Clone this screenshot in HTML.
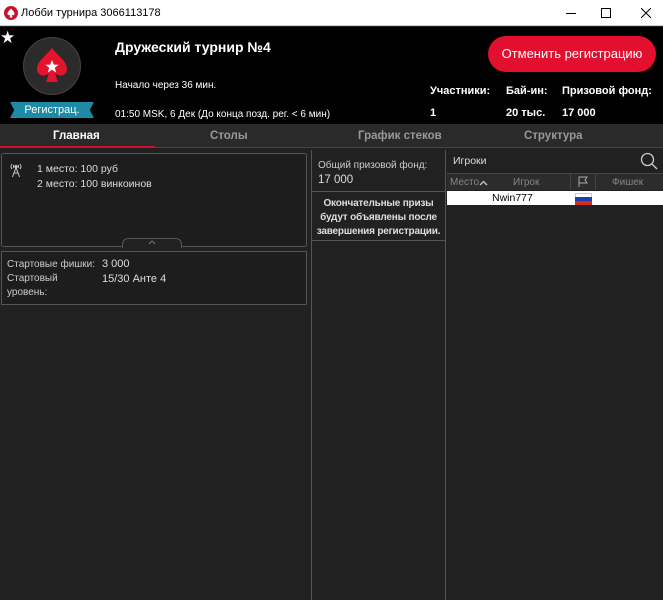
<!DOCTYPE html>
<html><head><meta charset="utf-8"><style>
*{margin:0;padding:0;box-sizing:border-box}
body{width:663px;height:600px;overflow:hidden;background:#212121;font-family:"Liberation Sans",sans-serif;color:#ddd;position:relative}
.a{position:absolute;white-space:nowrap}
</style></head><body>
<div class="a" style="left:0;top:0;width:663px;height:26px;background:#fff;border-bottom:1px solid #ccc"></div>
<svg class="a" style="left:4px;top:6px" width="14" height="14" viewBox="0 0 14 14"><circle cx="7" cy="7" r="7" fill="#c8102e"/><path d="M7 2.5C5 5 3.5 6 3.5 7.8c0 1.4 1.6 2 2.8 1L5.5 11.5h3L7.7 8.8c1.2 1 2.8.4 2.8-1C10.5 6 9 5 7 2.5z" fill="#fff"/></svg>
<div class="a" style="left:21px;top:7px;font-size:11px;color:#000">Лобби турнира 3066113178</div>
<div class="a" style="left:566px;top:13px;width:10px;height:1px;background:#000"></div>
<div class="a" style="left:601px;top:8px;width:10px;height:10px;border:1px solid #000"></div>
<svg class="a" style="left:641px;top:8px" width="10" height="10" viewBox="0 0 10 10"><path d="M0 0L10 10M10 0L0 10" stroke="#000" stroke-width="1"/></svg>
<div class="a" style="left:0;top:27px;width:663px;height:97px;background:#000"></div>
<div class="a" style="left:0;top:28px;color:#fff;font-size:17px">★</div>
<div class="a" style="left:23px;top:37px;width:58px;height:58px;border-radius:50%;background:#2b2b2b;border:1px solid #444"></div>
<svg class="a" style="left:34px;top:46px" width="36" height="40" viewBox="0 0 36 40"><path d="M18 2C12 10 3 15 3 23c0 6 7 9 12 4l-3 9h12l-3-9c5 5 12 2 12-4C33 15 24 10 18 2z" fill="#e5132c"/><path d="M18 14l1.8 4.6 4.9.2-3.9 3 1.4 4.8L18 23.8l-4.2 2.8 1.4-4.8-3.9-3 4.9-.2z" fill="#fff"/></svg>
<div class="a" style="left:10px;top:102px;width:84px;height:16px;background:#1e8aa6;clip-path:polygon(0 0,100% 0,95% 50%,100% 100%,0 100%,5% 50%);color:#fff;font-size:11px;text-align:center;line-height:16px">Регистрац.</div>
<div class="a" style="left:115px;top:39px;color:#fff;font-size:14px;font-weight:bold">Дружеский турнир №4</div>
<div class="a" style="left:115px;top:80px;color:#fff;font-size:10px">Начало через 36 мин.</div>
<div class="a" style="left:115px;top:109px;color:#fff;font-size:10px">01:50 MSK, 6 Дек (До конца позд. рег. &lt; 6 мин)</div>
<div class="a" style="left:488px;top:36px;width:168px;height:36px;border-radius:18px;background:#e20f2e;color:#fff;font-size:13px;text-align:center;line-height:36px">Отменить регистрацию</div>
<div class="a" style="left:430px;top:85px;color:#fff;font-size:11px;font-weight:bold">Участники:</div>
<div class="a" style="left:506px;top:85px;color:#fff;font-size:11px;font-weight:bold">Бай-ин:</div>
<div class="a" style="left:562px;top:85px;color:#fff;font-size:11px;font-weight:bold">Призовой фонд:</div>
<div class="a" style="left:430px;top:107px;color:#fff;font-size:11px;font-weight:bold">1</div>
<div class="a" style="left:506px;top:107px;color:#fff;font-size:11px;font-weight:bold">20 тыс.</div>
<div class="a" style="left:562px;top:107px;color:#fff;font-size:11px;font-weight:bold">17 000</div>
<div class="a" style="left:0;top:124px;width:663px;height:24px;background:#2a2a2a;border-bottom:1px solid #444"></div>
<div class="a" style="left:0;top:146px;width:155px;height:2px;background:#d0102a"></div>
<div class="a" style="left:53px;top:130px;color:#fff;font-size:11.5px;font-weight:bold">Главная</div>
<div class="a" style="left:210px;top:130px;color:#999;font-size:11.5px;font-weight:bold">Столы</div>
<div class="a" style="left:358px;top:130px;color:#999;font-size:11.5px;font-weight:bold">График стеков</div>
<div class="a" style="left:524px;top:130px;color:#999;font-size:11.5px;font-weight:bold">Структура</div>
<div class="a" style="left:1px;top:153px;width:306px;height:94px;border:1px solid #555;border-radius:3px;background:#1d1d1d"></div>
<svg class="a" style="left:8px;top:162px" width="16" height="16" viewBox="0 0 16 16" fill="none" stroke="#ccc" stroke-width="1"><path d="M4 2Q2 4.5 4 7M12 2Q14 4.5 12 7M6 3Q5 4.5 6 6M10 3Q11 4.5 10 6"/><circle cx="8" cy="4.5" r="1" fill="#ccc"/><path d="M8 5.5L4.5 15M8 5.5L11.5 15M6 11h4"/></svg>
<div class="a" style="left:37px;top:162px;font-size:10.5px;color:#ddd;line-height:15px">1 место: 100 руб<br>2 место: 100 винкоинов</div>
<div class="a" style="left:122px;top:238px;width:60px;height:10px;border:1px solid #555;border-bottom:none;border-radius:6px 6px 0 0;background:#222"></div>
<svg class="a" style="left:148px;top:240px" width="8" height="5" viewBox="0 0 8 5"><path d="M1 4L4 1L7 4" fill="none" stroke="#777"/></svg>
<div class="a" style="left:1px;top:251px;width:306px;height:54px;border:1px solid #555;background:#1d1d1d"></div>
<div class="a" style="left:7px;top:258px;font-size:10px;color:#ccc;line-height:14px">Стартовые фишки:<br>Стартовый<br>уровень:</div>
<div class="a" style="left:102px;top:257px;font-size:11px;color:#ddd;line-height:15px">3 000<br>15/30 Анте 4</div>
<div class="a" style="left:311px;top:150px;width:135px;height:450px;border-left:1px solid #555;border-right:1px solid #555"></div>
<div class="a" style="left:318px;top:160px;font-size:10px;color:#ccc">Общий призовой фонд:</div>
<div class="a" style="left:318px;top:174px;font-size:11.5px;color:#ddd">17 000</div>
<div class="a" style="left:312px;top:191px;width:133px;height:1px;background:#555"></div>
<div class="a" style="left:312px;top:197px;width:133px;font-size:10px;font-weight:bold;color:#ddd;text-align:center;line-height:14px;white-space:normal;letter-spacing:-0.2px">Окончательные призы<br>будут объявлены после<br>завершения регистрации.</div>
<div class="a" style="left:312px;top:240px;width:133px;height:1px;background:#555"></div>
<div class="a" style="left:453px;top:155px;font-size:10.5px;color:#ddd">Игроки</div>
<svg class="a" style="left:640px;top:152px" width="18" height="18" viewBox="0 0 18 18"><circle cx="7.5" cy="7.5" r="6" fill="none" stroke="#ccc" stroke-width="1.3"/><path d="M12 12l5 5" stroke="#ccc" stroke-width="1.3"/></svg>
<div class="a" style="left:447px;top:173px;width:216px;height:17px;background:#2c2c2c;border-top:1px solid #444"></div>
<div class="a" style="left:450px;top:177px;font-size:10px;color:#888">Место</div>
<svg class="a" style="left:479px;top:180px" width="9" height="6" viewBox="0 0 9 6"><path d="M1 5L4.5 1.5L8 5" fill="none" stroke="#ccc" stroke-width="1.3"/></svg>
<div class="a" style="left:513px;top:177px;font-size:10px;color:#888">Игрок</div>
<div class="a" style="left:570px;top:173px;width:26px;height:17px;border-left:1px solid #444;border-right:1px solid #444"></div>
<svg class="a" style="left:577px;top:176px" width="12" height="12" viewBox="0 0 12 12"><path d="M2 11V1h8l-2 3 2 3H2" fill="none" stroke="#aaa"/></svg>
<div class="a" style="left:612px;top:177px;font-size:10px;color:#888">Фишек</div>
<div class="a" style="left:447px;top:191px;width:216px;height:14px;background:#fff"></div>
<div class="a" style="left:492px;top:192px;font-size:10.5px;color:#000">Nwin777</div>
<div class="a" style="left:575px;top:193px;width:17px;height:4px;background:#fff;border:1px solid #ccc;border-bottom:none"></div>
<div class="a" style="left:575px;top:197px;width:17px;height:4px;background:#1c3fa8"></div>
<div class="a" style="left:575px;top:201px;width:17px;height:4px;background:#d52b1e"></div>
</body></html>
